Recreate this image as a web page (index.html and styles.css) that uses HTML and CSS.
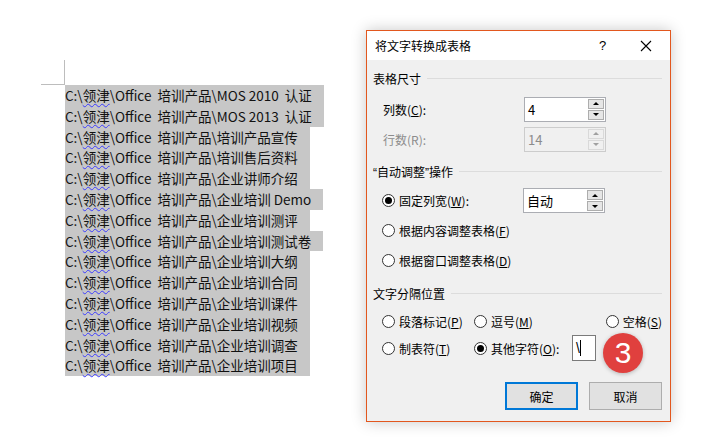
FILE: index.html
```html
<!DOCTYPE html>
<html>
  <head>
    <title>将文字转换成表格</title>
    <link rel="stylesheet" href="styles.css">
  </head>
  <body>
    <div class="doc">
      <div class="line">C:\<span class="spell">领津</span>\Office&nbsp; 培训产品\MOS 2010&nbsp; 认证</div>
      <div class="line">C:\<span class="spell">领津</span>\Office&nbsp; 培训产品\MOS 2013&nbsp; 认证</div>
      <div class="line">C:\<span class="spell">领津</span>\Office&nbsp; 培训产品\培训产品宣传</div>
      <div class="line">C:\<span class="spell">领津</span>\Office&nbsp; 培训产品\培训售后资料</div>
      <div class="line">C:\<span class="spell">领津</span>\Office&nbsp; 培训产品\企业讲师介绍</div>
      <div class="line">C:\<span class="spell">领津</span>\Office&nbsp; 培训产品\企业培训 Demo</div>
      <div class="line">C:\<span class="spell">领津</span>\Office&nbsp; 培训产品\企业培训测评</div>
      <div class="line">C:\<span class="spell">领津</span>\Office&nbsp; 培训产品\企业培训测试卷</div>
      <div class="line">C:\<span class="spell">领津</span>\Office&nbsp; 培训产品\企业培训大纲</div>
      <div class="line">C:\<span class="spell">领津</span>\Office&nbsp; 培训产品\企业培训合同</div>
      <div class="line">C:\<span class="spell">领津</span>\Office&nbsp; 培训产品\企业培训课件</div>
      <div class="line">C:\<span class="spell">领津</span>\Office&nbsp; 培训产品\企业培训视频</div>
      <div class="line">C:\<span class="spell">领津</span>\Office&nbsp; 培训产品\企业培训调查</div>
      <div class="line">C:\<span class="spell">领津</span>\Office&nbsp; 培训产品\企业培训项目</div>
    </div>

    <div class="dialog">
      <div class="titlebar">
        <span class="title">将文字转换成表格</span>
        <span class="help">?</span>
        <span class="close">
          <svg width="12" height="12" viewBox="0 0 12 12"><path d="M1 1L11 11M11 1L1 11" stroke="#000" stroke-width="1.1"/></svg>
        </span>
      </div>
      <div class="dlg-body">
        <div class="group-head"><span>表格尺寸</span><i></i></div>
        <div class="row r-cols">
          <span class="label">列数(<u>C</u>):</span>
          <div class="spin"><span class="val">4</span><div class="btns"><b class="up"></b><b class="down"></b></div></div>
        </div>
        <div class="row r-rows disabled">
          <span class="label">行数(R):</span>
          <div class="spin"><span class="val">14</span><div class="btns"><b class="up"></b><b class="down"></b></div></div>
        </div>

        <div class="group-head g2"><span><span class="q">“</span>自动调整<span class="q">”</span>操作</span><i></i></div>
        <div class="row r-fixed">
          <label class="radio label"><span class="dot on"></span>固定列宽(<u>W</u>):</label>
          <div class="spin"><span class="val">自动</span><div class="btns"><b class="up"></b><b class="down"></b></div></div>
        </div>
        <div class="row r-content">
          <label class="radio"><span class="dot"></span>根据内容调整表格(<u>F</u>)</label>
        </div>
        <div class="row r-window">
          <label class="radio"><span class="dot"></span>根据窗口调整表格(<u>D</u>)</label>
        </div>

        <div class="group-head g3"><span>文字分隔位置</span><i></i></div>
        <div class="row r-sep1">
          <label class="radio col1"><span class="dot"></span>段落标记(<u>P</u>)</label>
          <label class="radio col2"><span class="dot"></span>逗号(<u>M</u>)</label>
          <label class="radio"><span class="dot"></span>空格(<u>S</u>)</label>
        </div>
        <div class="row r-sep2">
          <label class="radio col1"><span class="dot"></span>制表符(<u>T</u>)</label>
          <label class="radio col2b"><span class="dot on"></span>其他字符(<u>O</u>):</label>
          <div class="char-box"><span class="caret">\</span></div>
          <span class="badge">3</span>
        </div>

        <div class="buttons">
          <button class="btn default">确定</button>
          <button class="btn">取消</button>
        </div>
      </div>
    </div>
  </body>
</html>
```

FILE: styles.css
```css
body {
  margin: 0;
  background-color: #fff;
  font-family: "Noto Sans CJK SC", "Noto Sans", sans-serif;
  width: 725px;
  height: 446px;
  overflow: hidden;
  position: relative;
}
.doc {
  position: relative;
  padding: 85px 0 0 65px;
  font-size: 13.5px;
  color: #111;
}
.doc::before {
  content: "";
  position: absolute;
  left: 41px;
  top: 60px;
  width: 23px;
  height: 24px;
  border-right: 1px solid #bdbdbd;
  border-bottom: 1px solid #bdbdbd;
}
.line {
  width: fit-content;
  height: 20.8px;
  line-height: 20.8px;
  padding-right: 12px;
  background-color: #c7c7c7;
  white-space: nowrap;
}
.spell {
  text-decoration: underline wavy #3b3bff;
  text-decoration-thickness: 1px;
  text-underline-offset: 2px;
}

/* dialog window */
.dialog {
  position: absolute;
  left: 366px;
  top: 30px;
  width: 305px;
  height: 392px;
  box-sizing: border-box;
  border: 1px solid #e2571e;
  background-color: #f0f0f0;
  box-shadow: 0 0 14px rgba(0, 0, 0, 0.22);
  font-size: 12px;
  color: #000;
}
.titlebar {
  height: 29px;
  background-color: #fff;
  display: flex;
  align-items: center;
  padding-left: 8px;
}
.title {
  flex: 1;
  font-size: 12px;
}
.help {
  width: 16px;
  font-size: 13px;
  margin-right: 25px;
  font-family: "Liberation Sans", sans-serif;
}
.close {
  width: 12px;
  height: 12px;
  margin-right: 18px;
  display: flex;
}
.dlg-body {
  padding: 8px 8px 0 6px;
}
.group-head {
  display: flex;
  align-items: center;
  height: 20px;
  color: #000;
}
.group-head .q {
  font-family: "Liberation Sans", sans-serif;
}
.group-head i {
  flex: 1;
  height: 1px;
  background-color: #dcdcdc;
  margin-left: 6px;
}
.g2 {
  margin-top: 9px;
}
.g3 {
  margin-top: 13px;
}
.row {
  display: flex;
  align-items: center;
  padding-left: 10px;
}
.label {
  width: 141px;
}
.r-cols {
  margin-top: 8px;
  height: 26px;
}
.r-rows {
  margin-top: 4px;
  height: 26px;
}
.disabled {
  color: #8c8c8c;
}
.r-fixed {
  margin-top: 7px;
  height: 25px;
  padding-left: 9px;
}
.r-content {
  margin-top: 7px;
  height: 20px;
  padding-left: 9px;
}
.r-window {
  margin-top: 10px;
  height: 20px;
  padding-left: 9px;
}
.r-sep1 {
  margin-top: 8px;
  height: 20px;
  padding-left: 9px;
}
.r-sep2 {
  margin-top: 4px;
  height: 26px;
  padding-left: 9px;
  position: relative;
}
.col1 {
  width: 92px;
}
.col2 {
  flex: 1;
}
.col2b {
  width: 98px;
}

/* spin box */
.spin {
  width: 82px;
  height: 25px;
  box-sizing: border-box;
  border: 1px solid #abadb3;
  background-color: #fff;
  display: flex;
}
.disabled .spin {
  border-color: #cccccc;
  background-color: #f0f0f0;
}
.spin .val {
  flex: 1;
  padding-left: 3px;
  line-height: 23px;
  font-size: 13px;
}
.btns {
  width: 16px;
  display: flex;
  flex-direction: column;
  padding: 1px 1px 1px 0;
  gap: 1px;
}
.btns b {
  flex: 1;
  background-color: #e6e6e6;
  border: 1px solid #adadad;
  display: flex;
  align-items: center;
  justify-content: center;
}
.disabled .btns b {
  background-color: #f0f0f0;
  border-color: #d9d9d9;
}
.btns b::after {
  content: "";
  border-left: 3px solid transparent;
  border-right: 3px solid transparent;
}
.btns .up::after {
  border-bottom: 3px solid #000;
}
.btns .down::after {
  border-top: 3px solid #000;
}
.disabled .btns .up::after {
  border-bottom-color: #a0a0a0;
}
.disabled .btns .down::after {
  border-top-color: #a0a0a0;
}

/* radio */
.radio {
  display: flex;
  align-items: center;
  white-space: nowrap;
}
.dot {
  width: 13px;
  height: 13px;
  box-sizing: border-box;
  border: 1px solid #333;
  border-radius: 50%;
  background-color: #fff;
  margin-right: 4px;
  display: flex;
  align-items: center;
  justify-content: center;
}
.dot.on::after {
  content: "";
  width: 7px;
  height: 7px;
  border-radius: 50%;
  background-color: #000;
}
.char-box {
  width: 24px;
  height: 26px;
  box-sizing: border-box;
  border: 1px solid #7a7a7a;
  background-color: #fff;
  padding-left: 3px;
  font-family: "Liberation Sans", sans-serif;
  font-size: 14px;
  line-height: 24px;
}
.caret {
  border-right: 1px solid #000;
}
.badge {
  position: absolute;
  left: 230px;
  top: -2px;
  width: 40px;
  height: 40px;
  border-radius: 50%;
  background-color: #e0403e;
  color: #fff;
  font-family: "Liberation Sans", sans-serif;
  font-size: 30px;
  line-height: 40px;
  text-align: center;
  box-shadow: 0 1px 4px rgba(0, 0, 0, 0.25);
}

/* buttons */
.buttons {
  display: flex;
  justify-content: flex-end;
  gap: 11px;
  margin-top: 21px;
}
.btn {
  width: 73px;
  height: 28px;
  border: 1px solid #adadad;
  background-color: #e1e1e1;
  font-family: "Noto Sans CJK SC", sans-serif;
  font-size: 12px;
  color: #000;
  padding: 0;
}
.btn.default {
  border: 2px solid #0078d7;
}
```
